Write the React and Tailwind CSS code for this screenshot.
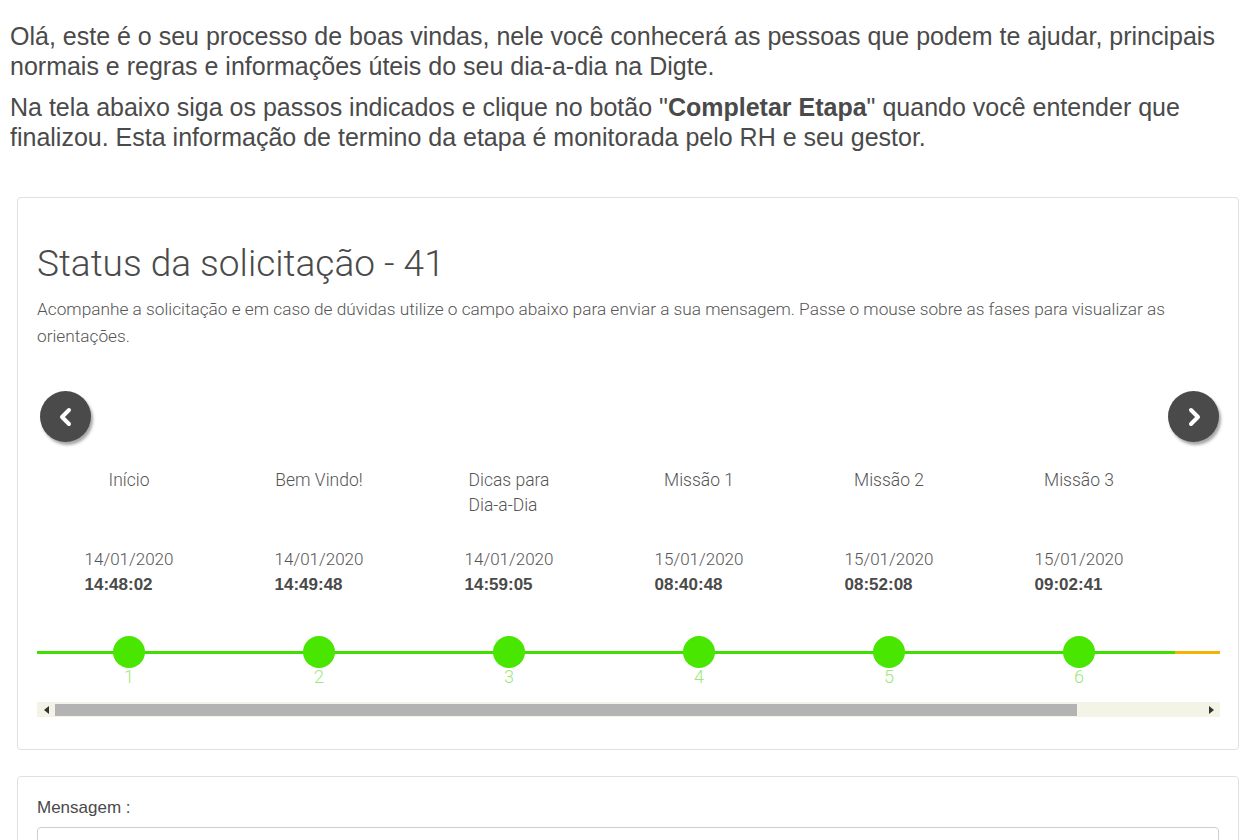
import React from "react";

const steps = [
  { label: ["Início"], date: "14/01/2020", time: "14:48:02" },
  { label: ["Bem Vindo!"], date: "14/01/2020", time: "14:49:48" },
  { label: ["Dicas para", "Dia-a-Dia"], date: "14/01/2020", time: "14:59:05" },
  { label: ["Missão 1"], date: "15/01/2020", time: "08:40:48" },
  { label: ["Missão 2"], date: "15/01/2020", time: "08:52:08" },
  { label: ["Missão 3"], date: "15/01/2020", time: "09:02:41" },
];

function Chevron({ dir }) {
  return (
    <svg width="18" height="20" viewBox="0 0 18 20">
      {dir === "left" ? (
        <polyline points="12,3 5,10 12,17" fill="none" stroke="#fff" strokeWidth="4" strokeLinecap="round" strokeLinejoin="round" />
      ) : (
        <polyline points="6,3 13,10 6,17" fill="none" stroke="#fff" strokeWidth="4" strokeLinecap="round" strokeLinejoin="round" />
      )}
    </svg>
  );
}

function NavButton({ dir }) {
  return (
    <button className="w-[51px] h-[51px] rounded-full bg-[#4a4a4a] flex items-center justify-center shadow-[2px_3px_3px_rgba(0,0,0,0.35)]">
      <Chevron dir={dir} />
    </button>
  );
}

const light = { fontFamily: 'Roboto, "Liberation Sans", sans-serif' };

export default function App() {
  return (
    <div className="min-h-[840px] bg-white text-[#4a4a4a]" style={{ fontFamily: '"Liberation Sans", Arial, sans-serif' }}>
      <div className="px-[10px] pt-[21px] text-[25px] leading-[30px]">
        <p>Olá, este é o seu processo de boas vindas, nele você conhecerá as pessoas que podem te ajudar, principais normais e regras e informações úteis do seu dia-a-dia na Digte.</p>
        <p className="mt-[11px]">
          Na tela abaixo siga os passos indicados e clique no botão "<b>Completar Etapa</b>" quando você entender que finalizou. Esta informação de termino da etapa é monitorada pelo RH e seu gestor.
        </p>
      </div>

      <div className="mx-[17px] mt-[45px] w-[1222px] rounded-[4px] border border-[#e0e0e0] px-[19px] pt-[46px] pb-[32px]">
        <h1 className="text-[37px] leading-[40px] font-light text-[#4a4a4a]" style={light}>
          Status da solicitação - 41
        </h1>
        <p className="mt-[12px] text-[17.25px] leading-[27px] font-light text-[#555]" style={light}>
          Acompanhe a solicitação e em caso de dúvidas utilize o campo abaixo para enviar a sua mensagem. Passe o mouse sobre as fases para visualizar as orientações.
        </p>

        <div className="mt-[41px] flex justify-between pl-[3px]">
          <NavButton dir="left" />
          <NavButton dir="right" />
        </div>

        <div className="relative mt-[20px] w-[1183px] overflow-hidden" style={light}>
          <div className="absolute left-0 top-[189px] h-[3px] w-[1138px] bg-[#3fe000]" />
          <div className="absolute left-[1138px] top-[189px] h-[3px] w-[45px] bg-[#f2b400]" />
          <div className="relative flex">
            {steps.map((s, i) => (
              <div key={i} className="w-[190px] shrink-0">
                <div className="w-[184px] flex flex-col items-center">
                  <div className="h-[85px] text-[17.5px] leading-[25px] font-light text-[#555] pt-[6px]">
                    {s.label.map((l, j) => (
                      <div key={j}>{l}</div>
                    ))}
                  </div>
                  <div className="text-left">
                    <div className="text-[17px] leading-[25px] font-light text-[#555]">{s.date}</div>
                    <div className="text-[17px] leading-[25px] font-bold text-[#4a4a4a]" style={{ fontFamily: '"Liberation Sans", Arial, sans-serif' }}>{s.time}</div>
                  </div>
                  <div className="mt-[39px] w-[32px] h-[32px] rounded-full bg-[#48e600]" />
                  <div className="text-[18px] leading-[20px] font-light text-[#9de87a] -mt-[1px]">{i + 1}</div>
                </div>
              </div>
            ))}
          </div>
        </div>

        <div className="mt-[15px] flex h-[15px] w-[1183px] items-center bg-[#f3f3e6]">
          <div className="flex w-[18px] justify-center">
            <svg width="5" height="8" viewBox="0 0 5 8"><polygon points="5,0 0,4 5,8" fill="#333" /></svg>
          </div>
          <div className="h-[12px] w-[1022px] bg-[#b3b3b3]" />
          <div className="flex-1" />
          <div className="flex w-[18px] justify-center">
            <svg width="5" height="8" viewBox="0 0 5 8"><polygon points="0,0 5,4 0,8" fill="#333" /></svg>
          </div>
        </div>
      </div>

      <div className="mx-[17px] mt-[26px] w-[1222px] rounded-[4px] border border-[#e0e0e0] px-[19px] pt-[20px] pb-[20px]">
        <div className="text-[17px] leading-[22px] text-[#4a4a4a]">Mensagem :</div>
        <div className="mt-[8px] h-[80px] w-[1182px] rounded-[4px] border border-[#cfcfcf]" />
      </div>
    </div>
  );
}
